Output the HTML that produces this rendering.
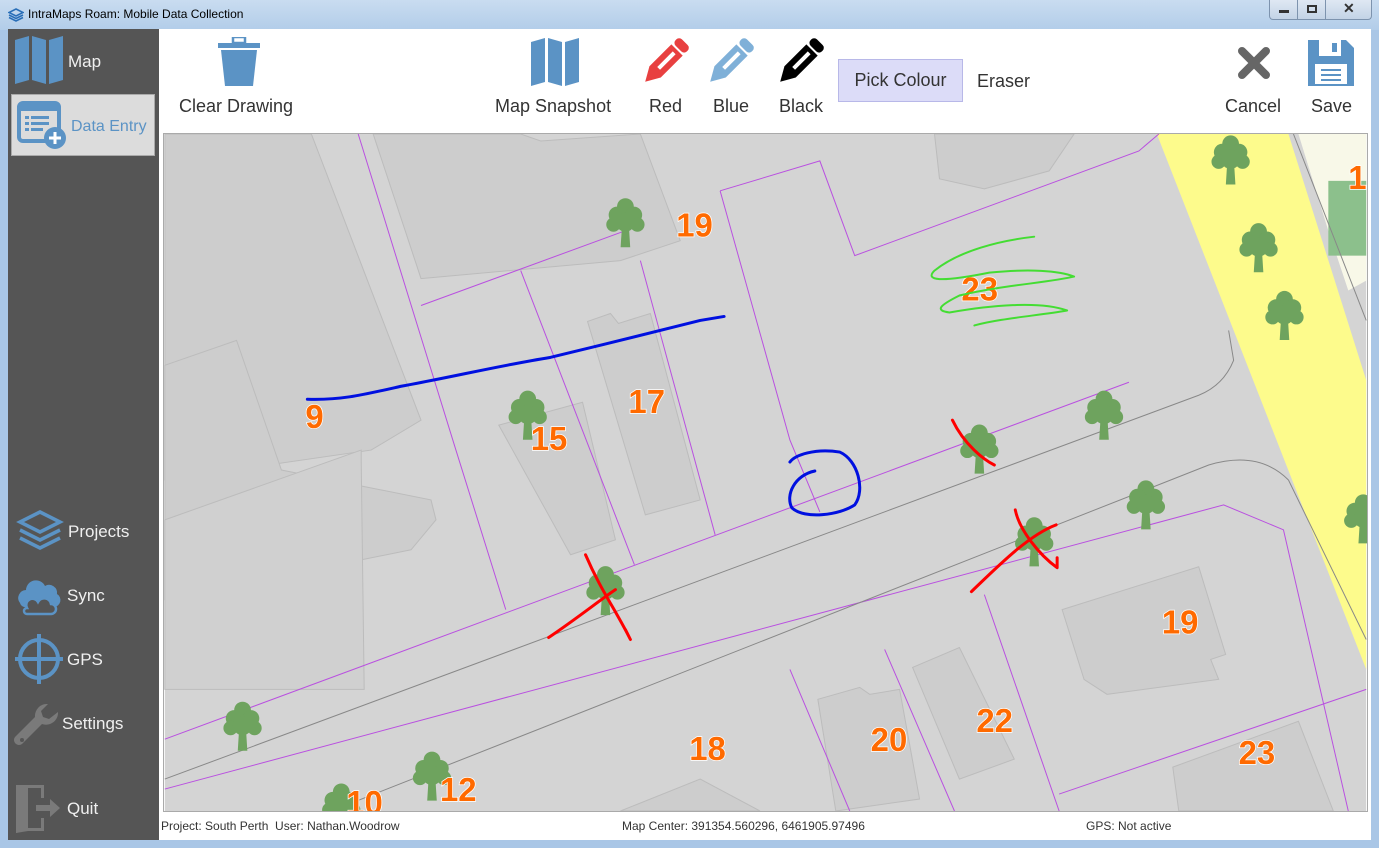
<!DOCTYPE html>
<html><head><meta charset="utf-8"><style>
*{margin:0;padding:0;box-sizing:border-box}
body{width:1379px;height:848px;overflow:hidden;background:#a9c6e6;font-family:"Segoe UI","Liberation Sans",sans-serif;position:relative}
.abs{position:absolute}
.title{left:0;top:0;width:1379px;height:30px;background:linear-gradient(#c9dcf0,#b2cde9)}
.title span{position:absolute;left:28px;top:7px;font-size:12px;color:#000}
.side{left:8px;top:29px;width:151px;height:811px;background:#555}
.main{left:159px;top:29px;width:1212px;height:811px;background:#fff}
.st{font-size:17px;color:#f0f0f0}
.tb{font-size:18px;color:#333}
.status{font-size:12px;color:#333;top:819px}
.wb{top:0;height:20px;border:1px solid #7d93ae;border-top:none;background:linear-gradient(#dfe8f3,#c3d3e6)}
</style></head><body>
<div class="abs title"><span>IntraMaps Roam: Mobile Data Collection</span>
<svg class="abs" style="left:8px;top:8px" width="16" height="14" viewBox="0 0 16 14"><path d="M8 1L15 4.5 8 8 1 4.5Z M1 7L8 10.5 15 7 M1 9.5L8 13 15 9.5" fill="none" stroke="#2a6fb8" stroke-width="1.6"/></svg>
</div>
<div class="abs wb" style="left:1269px;width:29px;border-radius:0 0 0 4px"><div class="abs" style="left:9px;top:10px;width:10px;height:3px;background:#333"></div></div>
<div class="abs wb" style="left:1297px;width:29px"><div class="abs" style="left:9px;top:5px;width:10px;height:8px;border:2px solid #333"></div></div>
<div class="abs wb" style="left:1325px;width:47px;border-radius:0 0 4px 0"><div class="abs" style="left:17px;top:0px;font-size:14px;font-weight:bold;color:#333">✕</div></div>

<div class="abs side"></div>
<svg class="abs" style="left:15px;top:36px" width="50" height="48" viewBox="0 0 50 48"><path d="M0 4L14 0V44L0 48Z M17 0L31 4V48L17 44Z M34 4L48 0V44L34 48Z" fill="#5b93c5"/></svg>
<div class="abs st" style="left:68px;top:52px">Map</div>
<div class="abs" style="left:11px;top:94px;width:144px;height:62px;background:#dcdcdc;border:1px solid #aaa"></div>
<svg class="abs" style="left:17px;top:101px" width="52" height="50" viewBox="0 0 52 50"><rect x="2" y="2" width="40" height="38" rx="4" fill="none" stroke="#5b93c5" stroke-width="4"/><rect x="2" y="2" width="40" height="8" fill="#5b93c5"/><g fill="#5b93c5"><rect x="8" y="15" width="4" height="3"/><rect x="14" y="15" width="18" height="3"/><rect x="8" y="21" width="4" height="3"/><rect x="14" y="21" width="18" height="3"/><rect x="8" y="27" width="4" height="3"/><rect x="14" y="27" width="12" height="3"/></g><circle cx="38" cy="37" r="11" fill="#5b93c5"/><path d="M38 31V43M32 37H44" stroke="#fff" stroke-width="3"/></svg>
<div class="abs" style="left:71px;top:118px;font-size:16px;color:#5b93c5">Data Entry</div>
<svg class="abs" style="left:16px;top:510px" width="48" height="42" viewBox="0 0 48 42"><path d="M24 2L44 12 24 22 4 12Z" fill="none" stroke="#5b93c5" stroke-width="3.5"/><path d="M4 20L24 30 44 20M4 28L24 38 44 28" fill="none" stroke="#5b93c5" stroke-width="3.5"/></svg>
<div class="abs st" style="left:68px;top:522px">Projects</div>
<svg class="abs" style="left:16px;top:577px" width="46" height="40" viewBox="0 0 46 40"><path d="M4 26a8 8 0 0 1 6-13a10 10 0 0 1 19-4a8 8 0 0 1 12 8a7 7 0 0 1-3 13H8a6 6 0 0 1-4-4Z" fill="#5b93c5"/><path d="M11 37h24a5 5 0 0 0 0-10a7 7 0 0 0-13-2a5 5 0 0 0-11 6a3 3 0 0 0 0 6Z" fill="#555" stroke="#5b93c5" stroke-width="2.5"/></svg>
<div class="abs st" style="left:67px;top:586px">Sync</div>
<svg class="abs" style="left:15px;top:634px" width="48" height="50" viewBox="0 0 48 50"><circle cx="24" cy="25" r="19" fill="none" stroke="#5b93c5" stroke-width="4"/><path d="M24 0V50M0 25H48" stroke="#5b93c5" stroke-width="4"/></svg>
<div class="abs st" style="left:67px;top:650px">GPS</div>
<svg class="abs" style="left:14px;top:702px" width="46" height="46" viewBox="0 0 46 46"><path d="M44 10a12 12 0 0 1-16 12L8 42a5 5 0 0 1-7-7l20-20A12 12 0 0 1 34 2l-7 7 2 6 6 2z" fill="#7a7a7a"/><circle cx="8" cy="38" r="2" fill="#555"/></svg>
<div class="abs st" style="left:62px;top:714px">Settings</div>
<svg class="abs" style="left:14px;top:783px" width="48" height="50" viewBox="0 0 48 50"><path d="M2 2H30V15H27V5H14V45H27V35H30V48H14L2 50Z" fill="#7a7a7a"/><path d="M2 2L14 5V47L2 50Z" fill="#7a7a7a"/><path d="M22 22H36V16L46 25 36 34V28H22Z" fill="#7a7a7a"/></svg>
<div class="abs st" style="left:67px;top:799px">Quit</div>

<div class="abs main"></div>
<svg class="abs" style="left:217px;top:37px" width="44" height="50" viewBox="0 0 44 50"><rect x="16" y="0" width="12" height="6" fill="none" stroke="#5b93c5" stroke-width="2.5"/><rect x="1" y="6" width="42" height="5" fill="#5b93c5"/><path d="M4 13H40L36 49H8Z" fill="#5b93c5"/></svg>
<div class="abs tb" style="left:179px;top:96px">Clear Drawing</div>
<svg class="abs" style="left:531px;top:38px" width="50" height="48" viewBox="0 0 50 48"><path d="M0 4L14 0V44L0 48Z M17 0L31 4V48L17 44Z M34 4L48 0V44L34 48Z" fill="#5b93c5"/></svg>
<div class="abs tb" style="left:495px;top:96px">Map Snapshot</div>
<svg class="abs" style="left:640px;top:38px" width="50" height="48" viewBox="0 0 50 48"><g transform="rotate(45 25 24)"><rect x="17" y="-4" width="16" height="9" rx="4" fill="#e84040"/><path d="M17 7H33V38L25 52 17 38Z" fill="#e84040"/><rect x="23" y="11" width="4" height="22" fill="#fff"/></g></svg>
<div class="abs tb" style="left:649px;top:96px">Red</div>
<svg class="abs" style="left:705px;top:38px" width="50" height="48" viewBox="0 0 50 48"><g transform="rotate(45 25 24)"><rect x="17" y="-4" width="16" height="9" rx="4" fill="#7fb0d8"/><path d="M17 7H33V38L25 52 17 38Z" fill="#7fb0d8"/><rect x="23" y="11" width="4" height="22" fill="#fff"/></g></svg>
<div class="abs tb" style="left:713px;top:96px">Blue</div>
<svg class="abs" style="left:775px;top:38px" width="50" height="48" viewBox="0 0 50 48"><g transform="rotate(45 25 24)"><rect x="17" y="-4" width="16" height="9" rx="4" fill="#000"/><path d="M17 7H33V38L25 52 17 38Z" fill="#000"/><rect x="23" y="11" width="4" height="22" fill="#fff"/></g></svg>
<div class="abs tb" style="left:779px;top:96px">Black</div>
<div class="abs" style="left:838px;top:59px;width:125px;height:43px;background:#dcdcf8;border:1px solid #b8b8e8;font-size:18px;color:#333;text-align:center;line-height:41px">Pick Colour</div>
<div class="abs tb" style="left:977px;top:71px">Eraser</div>
<svg class="abs" style="left:1237px;top:46px" width="34" height="34" viewBox="0 0 34 34"><path d="M5 5L29 29M29 5L5 29" stroke="#666" stroke-width="8" stroke-linecap="round"/></svg>
<div class="abs tb" style="left:1225px;top:96px">Cancel</div>
<svg class="abs" style="left:1308px;top:40px" width="46" height="46" viewBox="0 0 46 46"><path d="M0 0H38L46 8V46H0Z" fill="#5b93c5"/><rect x="11" y="0" width="22" height="16" fill="#fff"/><rect x="24" y="3" width="5" height="9" fill="#5b93c5"/><rect x="7" y="24" width="32" height="20" fill="#fff"/><g fill="#5b93c5"><rect x="13" y="29" width="20" height="2"/><rect x="13" y="34" width="20" height="2"/><rect x="13" y="39" width="20" height="2"/></g></svg>
<div class="abs tb" style="left:1311px;top:96px">Save</div>

<svg class="abs" style="left:163px;top:133px;border:1px solid #aaa" width="1205" height="679" viewBox="163 133 1205 679">
<defs>
<g id="t" transform="scale(1.2)"><circle cx="0" cy="-16" r="7"/><circle cx="-7" cy="-9" r="7"/><circle cx="7" cy="-9" r="7"/><circle cx="-10" cy="-1" r="6"/><circle cx="10" cy="-1" r="6"/><circle cx="0" cy="-3" r="8"/><path d="M-3 2H3L4 18H-4Z"/></g>
</defs>
<rect x="163" y="133" width="1205" height="679" fill="#d4d4d4"/>
<g fill="#cdcdcd" stroke="#bcbcbc" stroke-width="1">
<path d="M163 133H310L420 420 370 450 163 480Z"/>
<path d="M163 365L235 340 280 470 430 500 435 520 410 550 163 600Z"/>
<path d="M163 520L360 450V460L363 690 163 690Z" fill="#d0d0d0"/>
<path d="M372 133H520L540 140 640 133 680 240 620 260 420 278Z"/>
<path d="M587 321L610 313 618 323 650 313 700 500 645 515Z"/>
<path d="M498 425L582 402 615 540 570 555Z"/>
<path d="M935 133H1075L1050 170 985 188 940 178Z"/>
<path d="M1063 610L1200 567 1227 655 1212 660 1220 680 1108 695 1085 680Z"/>
<path d="M818 700L860 688 870 695 900 690 920 800 836 812Z"/>
<path d="M913 668L960 648 1015 760 960 780Z"/>
<path d="M1174 768L1300 722 1335 812H1180Z"/>
<path d="M620 812L700 780 760 812Z"/>
</g>
<path d="M1158 133H1290L1368 380V670Z" fill="#fdfb8c"/>
<path d="M1300 133H1368V280L1350 290 1330 230Z" fill="#f8f8e8"/>
<rect x="1330" y="180" width="38" height="75" fill="#8cc08c"/>
<g fill="none" stroke="#b950e0" stroke-width="1">
<path d="M357 133L455 450 505 610"/>
<path d="M420 305L625 230"/>
<path d="M520 270L634 565"/>
<path d="M640 260L715 535"/>
<path d="M720 190L820 160 855 255 1140 150 1160 133"/>
<path d="M720 190L790 440 820 512"/>
<path d="M163 740L1130 382"/>
<path d="M163 790L1225 505 1285 530 1350 812"/>
<path d="M790 670L850 812M885 650L955 812M985 595L1060 812"/>
<path d="M1060 795L1368 690"/>
</g>
<g fill="none" stroke="#888" stroke-width="1">
<path d="M163 780L1200 395Q1225 385 1235 360L1230 330"/>
<path d="M330 812L1210 465Q1260 450 1290 480"/>
<path d="M1290 480L1368 640"/>
<path d="M1295 133L1368 320"/>
</g>
<g fill="#6ea35e">
<use href="#t" x="625" y="225"/><use href="#t" x="1232" y="162"/><use href="#t" x="1260" y="250"/><use href="#t" x="1286" y="318"/>
<use href="#t" x="527" y="418"/><use href="#t" x="1105" y="418"/><use href="#t" x="980" y="452"/><use href="#t" x="1147" y="508"/>
<use href="#t" x="1035" y="545"/><use href="#t" x="605" y="594"/><use href="#t" x="241" y="730"/><use href="#t" x="431" y="780"/>
<use href="#t" x="340" y="812"/><use href="#t" x="1365" y="522"/>
</g>
<g font-family="Liberation Sans,sans-serif" font-weight="bold" font-size="33" fill="#ff6a00" stroke="#fff" stroke-width="1.5" paint-order="stroke">
<text x="676" y="236">19</text><text x="962" y="300">23</text><text x="628" y="413">17</text><text x="530" y="450">15</text>
<text x="304" y="428">9</text><text x="1163" y="634">19</text><text x="977" y="733">22</text><text x="871" y="752">20</text>
<text x="689" y="761">18</text><text x="439" y="802">12</text><text x="1240" y="765">23</text><text x="345" y="815">10</text><text x="1350" y="188">1</text>
</g>
<g fill="none" stroke-linecap="round" stroke-linejoin="round">
<path d="M306 399C340 400 360 395 400 386 450 377 500 365 550 357 600 345 660 330 700 320L724 316" stroke="#0010e0" stroke-width="3"/>
<path d="M815 471C795 475 785 495 792 508 805 520 840 515 855 505 866 490 858 460 840 452 815 448 795 455 790 462" stroke="#0010e0" stroke-width="3"/>
<path d="M1035 236C1000 240 960 250 935 270 925 280 940 282 990 272 1030 268 1060 270 1075 276 1050 282 1000 285 960 295 940 305 935 310 950 312 990 305 1040 300 1068 310 1040 315 1000 318 975 325 965 340" stroke="#44dd33" stroke-width="2"/>
<path d="M585 555C600 590 615 610 630 640L625 630M548 638C575 620 600 600 615 590 630 585 655 588" stroke="#ff0000" stroke-width="3"/>
<path d="M953 420C965 445 985 460 995 465 1000 458 990 455M953 492C970 470 990 458 1005 450" stroke="#ff0000" stroke-width="3"/>
<path d="M1016 510C1020 530 1040 555 1058 568L1058 558M972 592C1000 565 1030 535 1057 525" stroke="#ff0000" stroke-width="3"/>
</g>
</svg>

<div class="abs status" style="left:161px">Project: South Perth&nbsp; User: Nathan.Woodrow</div>
<div class="abs status" style="left:622px">Map Center: 391354.560296, 6461905.97496</div>
<div class="abs status" style="left:1086px">GPS: Not active</div>
</body></html>
